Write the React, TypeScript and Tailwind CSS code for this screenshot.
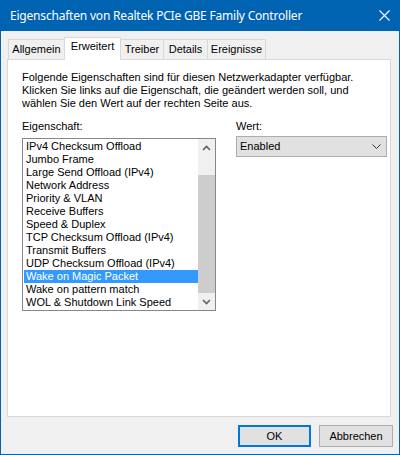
import React from "react";

const items = [
  "IPv4 Checksum Offload",
  "Jumbo Frame",
  "Large Send Offload (IPv4)",
  "Network Address",
  "Priority & VLAN",
  "Receive Buffers",
  "Speed & Duplex",
  "TCP Checksum Offload (IPv4)",
  "Transmit Buffers",
  "UDP Checksum Offload (IPv4)",
  "Wake on Magic Packet",
  "Wake on pattern match",
  "WOL & Shutdown Link Speed",
];

function Chevron({ up }: { up?: boolean }) {
  return (
    <svg width="9" height="6" viewBox="0 0 9 6">
      <path
        d={up ? "M1 5 L4.5 1.5 L8 5" : "M1 1 L4.5 4.5 L8 1"}
        fill="none"
        stroke="#606060"
        strokeWidth="1.6"
      />
    </svg>
  );
}

export default function App() {
  return (
    <div className="w-[400px] h-[455px] bg-[#0063B1] flex flex-col font-['Liberation_Sans',Arial,sans-serif] text-[11px] leading-[13px] text-black">
      <div className="h-[31px] flex items-center pl-[10px] pr-[10px] text-white">
        <span className="font-['Noto_Sans',sans-serif] text-[12px] leading-[16px] tracking-[-0.2px]">
          Eigenschaften von Realtek PCIe GBE Family Controller
        </span>
        <svg className="ml-auto" width="11" height="11" viewBox="0 0 11 11">
          <path d="M0.5 0.5 L10.5 10.5 M10.5 0.5 L0.5 10.5" stroke="#fff" strokeWidth="1.1" />
        </svg>
      </div>
      <div className="flex-1 mx-[1px] mb-[1px] bg-[#F0F0F0] flex flex-col">
        <div className="mt-[6px] ml-[7px] h-[22px] flex items-end">
          <div className="w-[57px] h-[20px] border border-b-0 border-[#D9D9D9] pt-[3px] text-center">Allgemein</div>
          <div className="relative z-10 -ml-[1px] -mb-[1px] w-[57px] h-[23px] border border-b-0 border-[#D9D9D9] bg-white pt-[2px] text-center">Erweitert</div>
          <div className="-ml-[1px] w-[44px] h-[20px] border border-b-0 border-[#D9D9D9] pt-[3px] text-center">Treiber</div>
          <div className="-ml-[1px] w-[45px] h-[20px] border border-b-0 border-[#D9D9D9] pt-[3px] text-center">Details</div>
          <div className="-ml-[1px] w-[59px] h-[20px] border border-b-0 border-[#D9D9D9] pt-[3px] text-center">Ereignisse</div>
        </div>
        <div className="ml-[6px] mr-[8px] h-[358px] border border-[#D9D9D9] bg-white pl-[14px] pt-[11px] flex flex-col">
          <div>
            <div>Folgende Eigenschaften sind für diesen Netzwerkadapter verfügbar.</div>
            <div>Klicken Sie links auf die Eigenschaft, die geändert werden soll, und</div>
            <div>wählen Sie den Wert auf der rechten Seite aus.</div>
          </div>
          <div className="mt-[10px] flex">
            <div className="flex flex-col">
              <div>Eigenschaft:</div>
              <div className="mt-[5px] w-[194px] h-[173px] border border-[#828790] flex">
                <div className="flex-1 pl-[1px] py-[1px]">
                  {items.map((it) => (
                    <div
                      key={it}
                      className={
                        "h-[13px] pl-[2px] whitespace-nowrap " +
                        (it === "Wake on Magic Packet" ? "bg-[#3399FF] text-white" : "")
                      }
                    >
                      {it}
                    </div>
                  ))}
                </div>
                <div className="w-[17px] bg-[#F0F0F0] flex flex-col">
                  <div className="h-[17px] flex items-center justify-center">
                    <Chevron up />
                  </div>
                  <div className="h-[19px]" />
                  <div className="flex-1 bg-[#CDCDCD]" />
                  <div className="h-[17px] flex items-center justify-center">
                    <Chevron />
                  </div>
                </div>
              </div>
            </div>
            <div className="ml-[20px] flex flex-col">
              <div>Wert:</div>
              <div className="mt-[3px] w-[151px] h-[21px] bg-[#E1E1E1] border border-[#ADADAD] flex items-center pl-[3px] pr-[5px]">
                <span>Enabled</span>
                <svg className="ml-auto" width="9" height="6" viewBox="0 0 9 6">
                  <path d="M0.5 0.5 L4.5 4.5 L8.5 0.5" fill="none" stroke="#333" strokeWidth="1" />
                </svg>
              </div>
            </div>
          </div>
        </div>
        <div className="mt-[8px] pr-[6px] flex justify-end gap-[8px]">
          <div className="w-[73px] h-[22px] bg-[#E1E1E1] border-2 border-[#0078D7] flex items-center justify-center">OK</div>
          <div className="w-[74px] h-[22px] bg-[#E1E1E1] border border-[#ADADAD] flex items-center justify-center">Abbrechen</div>
        </div>
      </div>
    </div>
  );
}
